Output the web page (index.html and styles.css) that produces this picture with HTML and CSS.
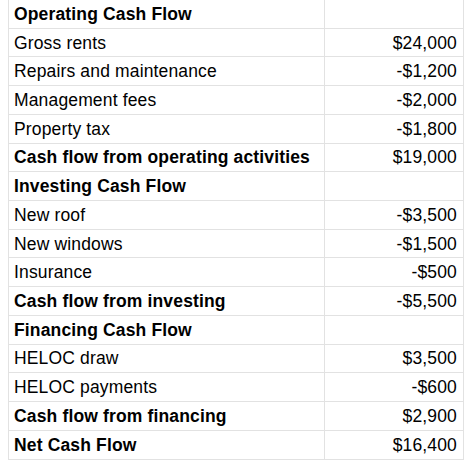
FILE: index.html
```html
<!DOCTYPE html>
<html>
<head>
<meta charset="utf-8">
<link rel="stylesheet" href="styles.css">
</head>
<body>
<table class="sheet">
  <colgroup><col class="c-label"><col class="c-val"></colgroup>
  <tbody>
    <tr class="b"><td>Operating Cash Flow</td><td></td></tr>
    <tr><td>Gross rents</td><td class="n">$24,000</td></tr>
    <tr><td>Repairs and maintenance</td><td class="n">-$1,200</td></tr>
    <tr><td>Management fees</td><td class="n">-$2,000</td></tr>
    <tr><td>Property tax</td><td class="n">-$1,800</td></tr>
    <tr class="b"><td>Cash flow from operating activities</td><td class="n">$19,000</td></tr>
    <tr class="b"><td>Investing Cash Flow</td><td></td></tr>
    <tr><td>New roof</td><td class="n">-$3,500</td></tr>
    <tr><td>New windows</td><td class="n">-$1,500</td></tr>
    <tr><td>Insurance</td><td class="n">-$500</td></tr>
    <tr class="b"><td>Cash flow from investing</td><td class="n">-$5,500</td></tr>
    <tr class="b"><td>Financing Cash Flow</td><td></td></tr>
    <tr><td>HELOC draw</td><td class="n">$3,500</td></tr>
    <tr><td>HELOC payments</td><td class="n">-$600</td></tr>
    <tr class="b"><td>Cash flow from financing</td><td class="n">$2,900</td></tr>
    <tr class="b"><td>Net Cash Flow</td><td class="n">$16,400</td></tr>
  </tbody>
</table>
</body>
</html>
```

FILE: styles.css
```css
html, body {
  margin: 0;
  padding: 0;
  background: #ffffff;
}
body {
  font-family: "Liberation Sans", Arial, Helvetica, sans-serif;
  font-size: 17.5px;
  letter-spacing: 0.15px;
  color: #000;
}
.sheet {
  border-collapse: collapse;
  margin: -1px 0 0 8px;
  width: 455px;
  table-layout: fixed;
}
.c-label { width: 316px; }
.c-val { width: 139px; }
.sheet td {
  border: 1px solid #e2e2e2;
  height: 27.72px;
  padding: 0 6px 0 5px;
  white-space: nowrap;
  line-height: 20px;
  vertical-align: middle;
}
.sheet tr.b td:first-child { font-weight: bold; }
.sheet td.n { text-align: right; }
```
